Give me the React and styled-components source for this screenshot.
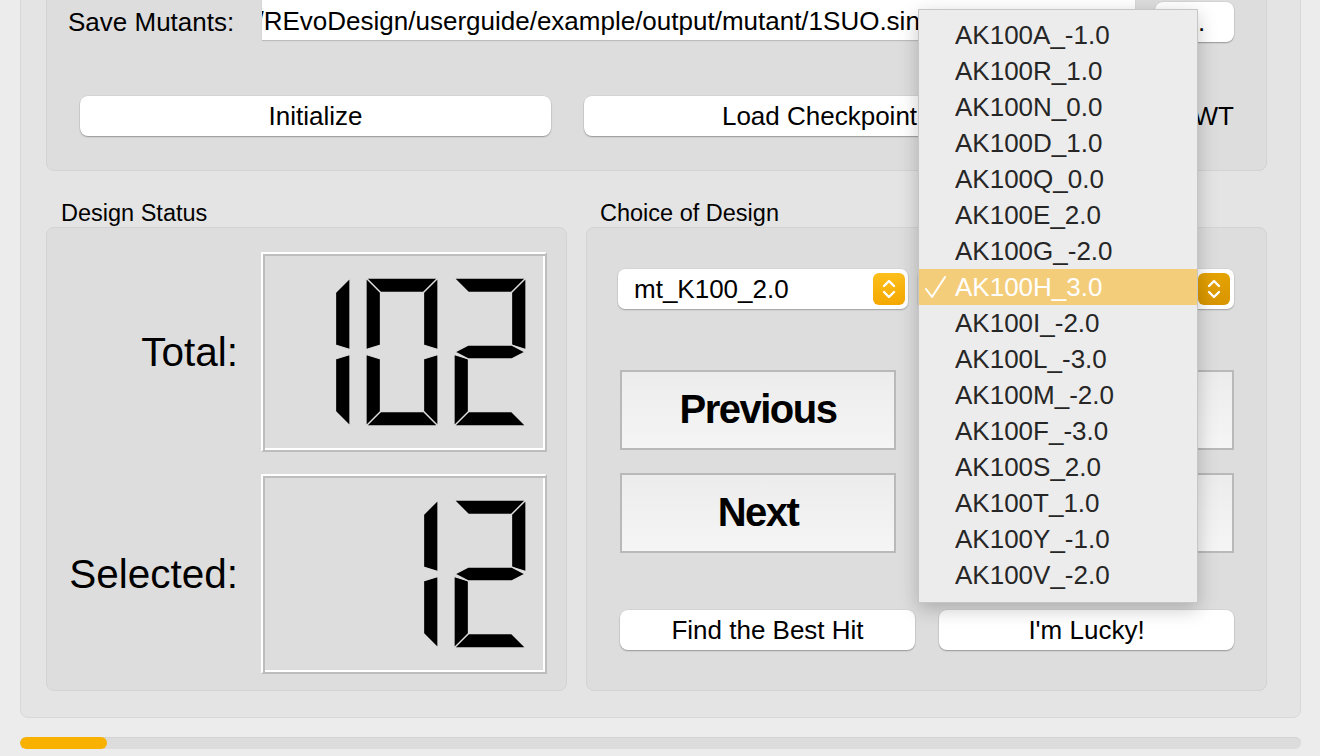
import React from 'react'
import styled, { createGlobalStyle } from 'styled-components'

const GlobalStyle = createGlobalStyle`
  html, body {
    margin: 0;
    padding: 0;
    background: #ececec;
  }
  body {
    font-family: "Liberation Sans", Arial, sans-serif;
    color: #000;
  }
`

const Window = styled.div`
  width: 1320px;
  height: 756px;
  overflow: hidden;
  background: #ececec;
  display: flex;
  flex-direction: column;
`

const Panel = styled.div`
  margin: -20px 19px 0 20px;
  background: #e4e4e4;
  border: 1px solid #d7d7d7;
  border-radius: 8px;
  padding: 0 33px 26px 25px;
`

const TopGroup = styled.div`
  background: #dddddd;
  border: 1px solid #d3d3d3;
  border-radius: 8px;
  padding: 18px 32px 34px 0;
`

const PathRow = styled.div`
  display: flex;
  align-items: flex-start;
  height: 40px;
  padding-left: 21px;
`

const FieldLabel = styled.div`
  flex: none;
  width: 194px;
  font-size: 26px;
  line-height: 44px;
`

const PathField = styled.div`
  flex: 1;
  height: 40px;
  background: #fff;
  overflow: hidden;
  white-space: nowrap;
  font-size: 26px;
  line-height: 43px;
  text-indent: -5.5px;
  box-shadow: 0 1px 1px rgba(0, 0, 0, 0.15);
`

const PushButton = styled.button`
  height: 40px;
  width: ${p => (p.$width ? `${p.$width}px` : 'auto')};
  margin-left: ${p => p.$gap || 0}px;
  margin-top: ${p => p.$drop || 0}px;
  border: none;
  border-radius: 8px;
  background: #fff;
  box-shadow: 0 1px 1.5px rgba(0, 0, 0, 0.3), 0 0 0 0.5px rgba(0, 0, 0, 0.06);
  font-family: "Liberation Sans", Arial, sans-serif;
  font-size: 26px;
  color: #000;
  padding: 0;
  white-space: nowrap;
  overflow: hidden;
`

const ActionRow = styled.div`
  margin-top: 56px;
  display: grid;
  grid-template-columns: 471px 471px 1fr;
  column-gap: 33px;
  padding-left: 33px;
  height: 40px;
`

const SideLabel = styled.div`
  font-size: 26px;
  line-height: 40px;
  text-align: right;
`

const Sections = styled.div`
  margin-top: 28px;
  display: grid;
  grid-template-columns: 521px 681px;
  column-gap: 19px;
`

const Section = styled.div`
  display: flex;
  flex-direction: column;
`

const SectionTitle = styled.div`
  height: 28px;
  line-height: 28px;
  font-size: 23.5px;
  padding-left: ${p => p.$indent}px;
`

const GroupBox = styled.div`
  box-sizing: border-box;
  height: 464px;
  background: #dddddd;
  border: 1px solid #d3d3d3;
  border-radius: 8px;
`

const StatusBox = styled(GroupBox)`
  display: grid;
  grid-template-columns: 1fr 286px;
  grid-template-rows: 200px 200px;
  row-gap: 22px;
  column-gap: 23px;
  padding: 24px 19px 0 0;
  align-items: center;
`

const StatLabel = styled.div`
  justify-self: end;
  font-size: 40.5px;
`

const LcdFrame = styled.div`
  box-sizing: border-box;
  width: 286px;
  height: 200px;
  border: 2px solid;
  border-color: #ffffff #bdbdbd #bdbdbd #ffffff;
  box-shadow: inset 2px 2px 0 #bdbdbd, inset -2px -2px 0 #ffffff;
  background: #dddddd;
  svg {
    display: block;
  }
`

const ChoiceBox = styled(GroupBox)`
  padding: 0 32px 0 31px;
`

const ComboRow = styled.div`
  margin-top: 41px;
  display: grid;
  grid-template-columns: 290px 316px;
  column-gap: 10px;
  height: 40px;
`

const Combo = styled.div`
  position: relative;
  display: flex;
  align-items: center;
  height: 40px;
  padding-left: 16px;
  background: #fff;
  border-radius: 7px;
  box-shadow: 0 1px 1.5px rgba(0, 0, 0, 0.25), 0 0 0 0.5px rgba(0, 0, 0, 0.06);
  font-size: 26px;
`

const Stepper = styled.div`
  margin-left: auto;
  margin-right: ${p => (p.$open ? 4 : 3)}px;
  width: 32px;
  height: 32px;
  border-radius: 6px;
  background: ${p => (p.$open
    ? 'linear-gradient(#e5a300, #d99500)'
    : 'linear-gradient(#fdbf1c, #f4a800)')};
  display: flex;
  align-items: center;
  justify-content: center;
`

const NavGrid = styled.div`
  margin-top: 61px;
  padding-left: 2px;
  display: grid;
  grid-template-columns: 276px 1fr;
  grid-template-rows: 80px 80px;
  column-gap: 40px;
  row-gap: 23px;
`

const NavButton = styled.button`
  box-sizing: border-box;
  border: 2px solid #b9b9b9;
  background: linear-gradient(#ececec, #f5f5f5);
  font-family: "Liberation Sans", Arial, sans-serif;
  font-weight: bold;
  font-size: 40px;
  letter-spacing: -1.5px;
  color: #000;
  padding: 0 0 2px;
`

const HitRow = styled.div`
  margin-top: 57px;
  padding-left: 2px;
  display: grid;
  grid-template-columns: 1fr 1fr;
  column-gap: 24px;
  height: 40px;
`

const Popup = styled.div`
  position: absolute;
  left: 0;
  top: -260px;
  z-index: 10;
  box-sizing: border-box;
  width: 280px;
  padding: 7px 0 9px;
  background: #ececec;
  border: 1px solid #c6c6c6;
  box-shadow: 0 6px 18px rgba(0, 0, 0, 0.22);
`

const MenuItem = styled.div`
  position: relative;
  height: 36px;
  line-height: 36px;
  padding-left: 36px;
  font-size: 26px;
  color: ${p => (p.$active ? '#fff' : '#262626')};
  background: ${p => (p.$active ? '#f3cd7a' : 'transparent')};
  svg {
    position: absolute;
    left: 5px;
    top: 7px;
  }
`

const Progress = styled.div`
  margin: 19px 19px 0 20px;
  height: 12px;
  border-radius: 6px;
  background: #dcdcdc;
  box-shadow: inset 0 1px 0 #d3d3d3;
  overflow: hidden;
`

const ProgressFill = styled.div`
  height: 100%;
  width: ${p => p.$value}%;
  background: #f9b100;
  border-radius: 6px;
`

const W = 72
const H = 148
const T = 14.5
const M = 74

const SEGMENTS = {
  a: `0,0 ${W},0 ${W - T},${T} ${T},${T}`,
  b: `${W},0 ${W},${M - 2.5} ${W - T},${M - 7} ${W - T},${T}`,
  c: `${W},${M + 2.5} ${W},${H} ${W - T},${H - T} ${W - T},${M + 7}`,
  d: `${T},${H - T} ${W - T},${H - T} ${W},${H} 0,${H}`,
  e: `0,${M + 2.5} ${T},${M + 7} ${T},${H - T} 0,${H}`,
  f: `0,0 ${T},${T} ${T},${M - 7} 0,${M - 2.5}`,
  g: `1,${M} ${T},${M - 7} ${W - T},${M - 7} ${W - 1},${M} ${W - T},${M + 7} ${T},${M + 7}`,
}

const DIGIT_SEGMENTS = {
  0: 'abcdef',
  1: 'bc',
  2: 'abdeg',
  3: 'abcdg',
  4: 'bcfg',
  5: 'acdfg',
  6: 'acdefg',
  7: 'abc',
  8: 'abcdefg',
  9: 'abcdfg',
}

// QLCDNumber-like readout, digits right aligned in fixed cells
const LcdNumber = ({ value, digits = 3 }) => {
  const text = String(value).padStart(digits, ' ')
  return (
    <LcdFrame>
      <svg width="282" height="196" viewBox="0 0 282 196">
        <title>{value}</title>
        {text.split('').map((ch, i) => ch === ' ' ? null : (
          <g key={i} transform={`translate(${15 + i * 88}, 24)`}>
            {DIGIT_SEGMENTS[ch].split('').map(s => (
              <polygon key={s} points={SEGMENTS[s]} fill="#000" stroke="#dddddd" strokeWidth="1.3" />
            ))}
          </g>
        ))}
      </svg>
    </LcdFrame>
  )
}

const Chevrons = () => (
  <svg width="32" height="32" viewBox="0 0 32 32">
    <path d="M11 13 L16 8 L21 13 M11 19 L16 24 L21 19" fill="none" stroke="#fff" strokeWidth="2.4" strokeLinecap="round" strokeLinejoin="round" />
  </svg>
)

const Check = () => (
  <svg width="26" height="24" viewBox="0 0 26 24">
    <polyline points="2,13 8,21 21,1" fill="none" stroke="#fff" strokeWidth="2" strokeLinejoin="round" strokeLinecap="round" />
  </svg>
)

const mutants = [
  'AK100A_-1.0', 'AK100R_1.0', 'AK100N_0.0', 'AK100D_1.0',
  'AK100Q_0.0', 'AK100E_2.0', 'AK100G_-2.0', 'AK100H_3.0',
  'AK100I_-2.0', 'AK100L_-3.0', 'AK100M_-2.0', 'AK100F_-3.0',
  'AK100S_2.0', 'AK100T_1.0', 'AK100Y_-1.0', 'AK100V_-2.0',
]
const current = 'AK100H_3.0'

export default function App() {
  return (
    <Window>
      <GlobalStyle />
      <Panel>
        <TopGroup>
          <PathRow>
            <FieldLabel>Save Mutants:</FieldLabel>
            <PathField>/REvoDesign/userguide/example/output/mutant/1SUO.sin</PathField>
            <PushButton $width={79} $gap={20} $drop={2}>...</PushButton>
          </PathRow>
          <ActionRow>
            <PushButton>Initialize</PushButton>
            <PushButton>Load Checkpoint</PushButton>
            <SideLabel>WT</SideLabel>
          </ActionRow>
        </TopGroup>

        <Sections>
          <Section>
            <SectionTitle $indent={15}>Design Status</SectionTitle>
            <StatusBox>
              <StatLabel>Total:</StatLabel>
              <LcdNumber value={102} />
              <StatLabel>Selected:</StatLabel>
              <LcdNumber value={12} />
            </StatusBox>
          </Section>

          <Section>
            <SectionTitle $indent={14}>Choice of Design</SectionTitle>
            <ChoiceBox>
              <ComboRow>
                <Combo>
                  mt_K100_2.0
                  <Stepper><Chevrons /></Stepper>
                </Combo>
                <Combo>
                  <Stepper $open><Chevrons /></Stepper>
                  <Popup>
                    {mutants.map(m => (
                      <MenuItem key={m} $active={m === current}>
                        {m === current && <Check />}
                        {m}
                      </MenuItem>
                    ))}
                  </Popup>
                </Combo>
              </ComboRow>
              <NavGrid>
                <NavButton>Previous</NavButton>
                <NavButton />
                <NavButton>Next</NavButton>
                <NavButton />
              </NavGrid>
              <HitRow>
                <PushButton>Find the Best Hit</PushButton>
                <PushButton>I'm Lucky!</PushButton>
              </HitRow>
            </ChoiceBox>
          </Section>
        </Sections>
      </Panel>
      <Progress>
        <ProgressFill $value={6.8} />
      </Progress>
    </Window>
  )
}
